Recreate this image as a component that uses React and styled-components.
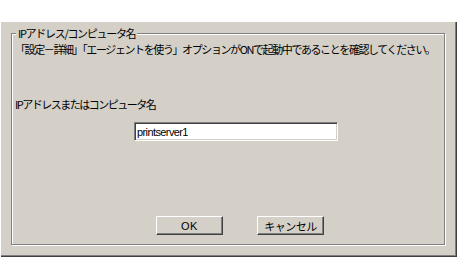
import React from 'react';
import styled, { createGlobalStyle } from 'styled-components';

const Global = createGlobalStyle`
  html, body { margin: 0; padding: 0; background: #fff; }
  body { overflow: hidden; }
`;

const Screen = styled.div`
  width: 457px;
  height: 257px;
  background: #fff;
  display: flex;
  flex-direction: column;
`;

const TopStrip = styled.div`
  height: 22px;
  background: #fff;
`;

const Dialog = styled.div`
  height: 235px;
  box-sizing: border-box;
  background: #d4d0c8;
  border-left: 1px solid #fff;
  box-shadow: inset -1px -1px 0 #404040, inset -2px -2px 0 #808080;
  padding: 11px 0 0 10px;
`;

const GroupBox = styled.div`
  position: relative;
  box-sizing: border-box;
  width: 434px;
  height: 212px;
  border: 1px solid #808080;
  box-shadow: inset 1px 1px 0 #fff, 1px 1px 0 #fff;
  padding: 9px 0 0 3px;
  display: flex;
  flex-direction: column;
  align-items: flex-start;
`;

const Legend = styled.div`
  position: absolute;
  left: 4px;
  top: -7px;
  padding: 0 2px;
  background: #d4d0c8;
  font: 11px/12px "Noto Sans CJK JP", sans-serif;
  letter-spacing: -1.3px;
  color: #000;
`;

const Text = styled.div`
  font: 11px/12px "Noto Sans CJK JP", sans-serif;
  letter-spacing: ${({ tight }) => (tight ? '-1.5px' : '-1.4px')};
  color: #000;
  margin-top: ${({ gap }) => gap || 0}px;
  white-space: nowrap;
`;

const Input = styled.input`
  box-sizing: border-box;
  width: 204px;
  height: 19px;
  margin: 12px 0 0 119px;
  padding: 0 0 0 2px;
  background: #fff;
  border: 1px solid;
  border-color: #808080 #fff #fff #808080;
  box-shadow: inset 1px 1px 0 #404040, inset -1px -1px 0 #d4d0c8;
  font: 11px "Liberation Sans", Arial, sans-serif;
  letter-spacing: -0.6px;
  color: #000;
  outline: none;
`;

const ButtonRow = styled.div`
  display: flex;
  gap: 34px;
  margin: 75px 0 0 141px;
`;

const Button = styled.button`
  box-sizing: border-box;
  width: 67px;
  height: 19px;
  padding: 0;
  background: #d4d0c8;
  border: 1px solid;
  border-color: #fff #404040 #404040 #fff;
  box-shadow: inset -1px -1px 0 #808080;
  font: ${({ jp }) => (jp ? '11px "Noto Sans CJK JP", sans-serif' : '11px "Liberation Sans", Arial, sans-serif')};
  letter-spacing: ${({ jp }) => (jp ? '-0.5px' : '0.5px')};
  color: #000;
  line-height: 16px;
`;

export default function App() {
  return (
    <Screen>
      <Global />
      <TopStrip />
      <Dialog>
        <GroupBox>
          <Legend>IPアドレス/コンピュータ名</Legend>
          <Text>「設定－詳細」「エージェントを使う」オプションがONで起動中であることを確認してください。</Text>
          <Text gap={43} tight>IPアドレスまたはコンピュータ名</Text>
          <Input defaultValue="printserver1" />
          <ButtonRow>
            <Button>OK</Button>
            <Button jp>キャンセル</Button>
          </ButtonRow>
        </GroupBox>
      </Dialog>
    </Screen>
  );
}
